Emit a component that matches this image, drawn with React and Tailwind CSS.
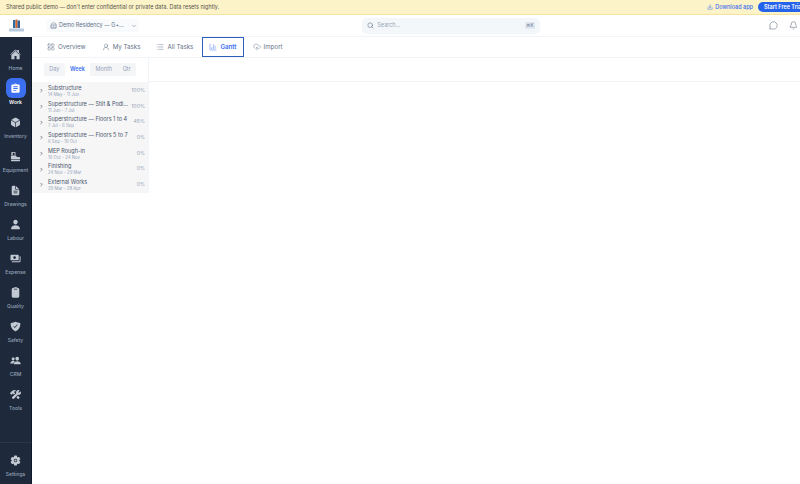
import React from 'react';
import {
  IoHome, IoClipboard, IoCube, IoDocumentText, IoPerson, IoShieldCheckmark, IoPeople, IoSettings, IoConstruct,
} from 'react-icons/io5';
import { MdAssignment, MdPayments } from 'react-icons/md';
import {
  LayoutGrid, UserRound, List, ChartColumn, CloudUpload, Building2, ChevronDown, ChevronRight, Search, MessageCircle, Bell, Download,
} from 'lucide-react';

function EquipmentIcon({ size }) {
  return (
    <svg width={size} height={size} viewBox="0 0 24 24" fill="currentColor">
      <path d="M4 2h7a1 1 0 0 1 1 1v6h-2V4H6v5H3V3a1 1 0 0 1 1-1z" />
      <path d="M3 10h10l2 3h5a2 2 0 0 1 2 2v3H2v-7a1 1 0 0 1 1-1z" />
      <rect x="2" y="19" width="20" height="3.5" rx="1.75" />
    </svg>
  );
}

const navItems = [
  { label: 'Home', icon: IoHome },
  { label: 'Work', icon: MdAssignment, active: true },
  { label: 'Inventory', icon: IoCube },
  { label: 'Equipment', icon: EquipmentIcon },
  { label: 'Drawings', icon: IoDocumentText },
  { label: 'Labour', icon: IoPerson },
  { label: 'Expense', icon: MdPayments },
  { label: 'Quality', icon: IoClipboard },
  { label: 'Safety', icon: IoShieldCheckmark },
  { label: 'CRM', icon: IoPeople },
  { label: 'Tools', icon: IoConstruct },
];

const tabs = [
  { label: 'Overview', icon: LayoutGrid },
  { label: 'My Tasks', icon: UserRound },
  { label: 'All Tasks', icon: List },
  { label: 'Gantt', icon: ChartColumn, active: true },
  { label: 'Import', icon: CloudUpload },
];

const phases = [
  { name: 'Substructure', dates: '14 May - 11 Jun', pct: '100%' },
  { name: 'Superstructure — Stilt & Podi...', dates: '11 Jun - 7 Jul', pct: '100%' },
  { name: 'Superstructure — Floors 1 to 4', dates: '7 Jul - 6 Sep', pct: '45%' },
  { name: 'Superstructure — Floors 5 to 7', dates: '6 Sep - 16 Oct', pct: '0%' },
  { name: 'MEP Rough-in', dates: '16 Oct - 24 Nov', pct: '0%' },
  { name: 'Finishing', dates: '24 Nov - 29 Mar', pct: '0%' },
  { name: 'External Works', dates: '29 Mar - 28 Apr', pct: '0%' },
];

function NavItem({ item }) {
  const Icon = item.icon;
  return (
    <div className="h-[34px] flex flex-col items-center justify-start">
      {item.active ? (
        <div className="w-[20px] h-[20px] rounded-[6px] bg-[#3b6ff0] flex items-center justify-center text-white">
          <Icon size={11} />
        </div>
      ) : (
        <div className="w-[20px] h-[20px] flex items-center justify-center text-[#c3c9d3]">
          <Icon size={11} />
        </div>
      )}
      <span className={`text-[5px] leading-[8px] ${item.active ? 'text-white font-semibold' : 'text-[#94a3b8] font-medium'}`}>
        {item.label}
      </span>
    </div>
  );
}

function Sidebar() {
  return (
    <aside className="w-[32px] shrink-0 flex flex-col">
      <div className="h-[22px] bg-white flex items-center justify-center">
        <svg width="17" height="14" viewBox="0 0 17 14">
          <rect x="5" y="1" width="2.5" height="8" fill="#2f6f9f" />
          <rect x="7.5" y="0.5" width="2" height="8.5" fill="#d9622b" />
          <rect x="9.5" y="1.5" width="2.5" height="7.5" fill="#3a5f8a" />
          <rect x="1" y="9.5" width="15" height="3" fill="#b9cbe0" />
        </svg>
      </div>
      <div className="flex-1 bg-[#1e293b] border-r border-[#0f172a] flex flex-col pt-[7px]">
        {navItems.map((item) => (
          <NavItem key={item.label} item={item} />
        ))}
        <div className="mt-auto border-t border-[#2b3649] pt-[12px] pb-[6px] flex flex-col items-center">
          <IoSettings size={11} className="text-[#c3c9d3]" />
          <span className="text-[5px] leading-[8px] mt-[4px] text-[#94a3b8] font-medium">Settings</span>
        </div>
      </div>
    </aside>
  );
}

function TopBar() {
  return (
    <div className="h-[22px] shrink-0 border-b border-[#f1f5f9] flex items-center pl-[14px] pr-[2px]">
      <div className="w-[94px] h-[13px] rounded-[3px] bg-[#f8fafc] flex items-center pl-[4px] text-[#64748b]">
        <Building2 size={7} strokeWidth={1.5} />
        <span className="text-[5.5px] ml-[2px] whitespace-nowrap">Demo Residency — G+...</span>
        <ChevronDown size={6} className="ml-[7px]" />
      </div>
      <div className="ml-[223px] w-[179px] h-[16px] rounded-[5px] bg-[#f4f7fa] flex items-center pl-[5px] pr-[5px] text-[#64748b]">
        <Search size={7} />
        <span className="text-[5.5px] text-[#94a3b8] ml-[3px]">Search...</span>
        <span className="ml-auto text-[4.5px] bg-[#e2e8f0] rounded-[1px] px-[1.5px] leading-[7px]">⌘K</span>
      </div>
      <MessageCircle size={9} strokeWidth={1.3} className="ml-[229px] text-[#475569]" />
      <Bell size={9} strokeWidth={1.3} className="ml-[11px] text-[#475569]" />
    </div>
  );
}

function Tabs() {
  return (
    <div className="h-[21px] shrink-0 flex items-stretch pl-[8px] gap-[2px] border-b border-[#f1f5f9]">
      {tabs.map((tab) => {
        const Icon = tab.icon;
        return (
          <div
            key={tab.label}
            className={`px-[6px] flex items-center gap-[3px] text-[6.2px] ${
              tab.active ? 'border border-[#2d5fb8] text-[#3b6ff0] font-semibold' : 'text-[#64748b] border border-transparent'
            }`}
          >
            <Icon size={8} strokeWidth={1.4} />
            {tab.label}
          </div>
        );
      })}
    </div>
  );
}

function PhaseRow({ phase }) {
  return (
    <div className="h-[15.7px] flex items-center pl-[7px] pr-[3px]">
      <ChevronRight size={5} strokeWidth={3} className="text-[#334155] mr-[4px] shrink-0" />
      <div className="min-w-0 flex-1">
        <div className="text-[5.5px] leading-[7px] text-[#475569] whitespace-nowrap">{phase.name}</div>
        <div className="text-[4.3px] leading-[5px] text-[#94a3b8]">{phase.dates}</div>
      </div>
      <span className="text-[5.2px] text-[#94a3b8]">{phase.pct}</span>
    </div>
  );
}

function GanttPanel() {
  const modes = ['Day', 'Week', 'Month', 'Qtr'];
  return (
    <div className="flex-1 flex items-start">
      <div className="w-[117px] shrink-0 border-r border-[#f1f5f9]">
        <div className="h-[24px] bg-white flex items-start pt-[5px] pl-[12px]">
          <div className="h-[13px] w-[92px] rounded-[2px] bg-[#f4f5f7] flex items-stretch">
            {modes.map((mode) => (
              <div
                key={mode}
                className={`flex-auto px-[3px] flex items-center justify-center text-[5.5px] ${
                  mode === 'Week' ? 'bg-white text-[#3b6ff0] font-semibold' : 'text-[#94a3b8]'
                }`}
              >
                {mode}
              </div>
            ))}
          </div>
        </div>
        <div className="bg-[#f6f6f7] pt-[1px]">
          {phases.map((phase) => (
            <PhaseRow key={phase.name} phase={phase} />
          ))}
        </div>
      </div>
      <div className="flex-1 h-[24px] border-b border-[#f1f5f9]" />
    </div>
  );
}

export default function App() {
  return (
    <div className="w-[800px] h-[484px] overflow-hidden flex flex-col bg-white font-['Inter',sans-serif]">
      <div className="h-[15px] shrink-0 bg-[#fdf3c8] border-b border-[#f5e3a0] flex items-center pl-[6px] text-[5.5px] text-[#57534e]">
        <span>Shared public demo — don't enter confidential or private data. Data resets nightly.</span>
        <div className="ml-auto flex items-center">
          <Download size={6} className="text-[#3b6ff0]" />
          <span className="ml-[2px] text-[#3b6ff0] font-medium">Download app</span>
          <div className="ml-[5px] w-[42px] h-[10px] rounded-l-full bg-[#2563eb] text-white font-semibold pl-[6px] flex items-center whitespace-nowrap overflow-hidden">
            Start Free Trial
          </div>
        </div>
      </div>
      <div className="flex-1 flex min-h-0">
        <Sidebar />
        <main className="flex-1 flex flex-col min-w-0">
          <TopBar />
          <Tabs />
          <GanttPanel />
        </main>
      </div>
    </div>
  );
}
